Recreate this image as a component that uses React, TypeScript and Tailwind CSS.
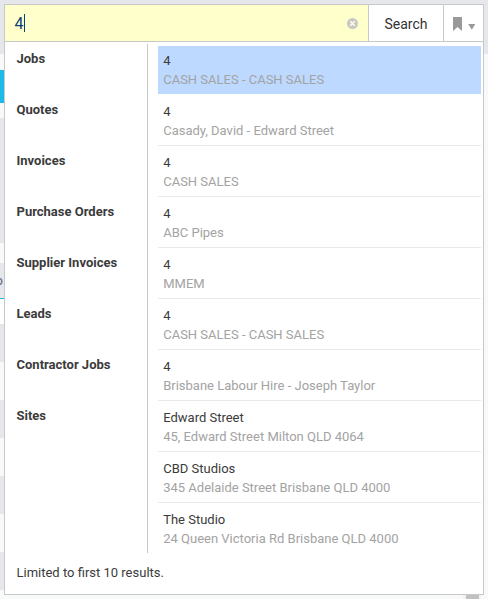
const groups = [
  { label: 'Jobs', items: [['4', 'CASH SALES - CASH SALES']] },
  { label: 'Quotes', items: [['4', 'Casady, David - Edward Street']] },
  { label: 'Invoices', items: [['4', 'CASH SALES']] },
  { label: 'Purchase Orders', items: [['4', 'ABC Pipes']] },
  { label: 'Supplier Invoices', items: [['4', 'MMEM']] },
  { label: 'Leads', items: [['4', 'CASH SALES - CASH SALES']] },
  { label: 'Contractor Jobs', items: [['4', 'Brisbane Labour Hire - Joseph Taylor']] },
  {
    label: 'Sites',
    items: [
      ['Edward Street', '45, Edward Street Milton QLD 4064'],
      ['CBD Studios', '345 Adelaide Street Brisbane QLD 4000'],
      ['The Studio', '24 Queen Victoria Rd Brisbane QLD 4000'],
    ],
  },
];

const results = groups.flatMap((g) => g.items);

function PageBehind() {
  return (
    <div className="flex h-full justify-between">
      <div className="flex w-1 flex-col overflow-hidden">
        <div className="h-[54px] shrink-0 bg-[#e6e7eb]" />
        <div className="h-4 shrink-0" />
        <div className="h-[33px] shrink-0 bg-[#1cb9e9]" />
        <div className="h-[15px] shrink-0" />
        <div className="h-[125px] shrink-0 bg-[#e6e7eb]" />
        <div className="h-5 shrink-0" />
        <div className="flex h-9 shrink-0 items-center justify-end border-b border-[#1cb9e9] bg-[#e6e7eb] pr-px text-[13px] text-[#5b6678]">
          <span>o</span>
        </div>
        <div className="h-[25px] shrink-0 bg-white" />
        <div className="h-[38px] shrink-0 bg-[#e6e7eb]" />
        <div className="h-[38px] shrink-0" />
        <div className="h-[38px] shrink-0 bg-[#e6e7eb]" />
        <div className="h-[38px] shrink-0" />
        <div className="h-[38px] shrink-0 bg-[#e6e7eb]" />
        <div className="h-[38px] shrink-0" />
        <div className="h-[38px] shrink-0 bg-[#e6e7eb]" />
      </div>
      <div className="flex grow flex-col justify-between">
        <div className="h-[54px] bg-[#e6e7eb]" />
        <div className="mr-[7px] flex h-1 w-[18px] justify-center self-end bg-[#f1f1f1]">
          <div className="w-[13px] bg-[#c1c1c1]" />
        </div>
      </div>
    </div>
  );
}

export default function App() {
  return (
    <div className="relative h-[599px] w-[488px] overflow-hidden bg-[#f8f9f9] font-['Roboto',sans-serif] text-[13px] text-[#3b3b3b]">
      <PageBehind />
      <div className="absolute top-1 left-1 flex h-[591px] w-[480px] flex-col border border-[#c8c8c8] bg-white">
        <div className="flex h-[37px] shrink-0 border-b border-[#c8c8c8]">
          <div className="flex w-[364px] items-center border-r border-[#c8c8c8] bg-[#ffffcc] pr-[10px] pl-[9.5px]">
            <span className="w-[9.5px] pt-px text-[16px] leading-[18px] text-[#0b4078]">4</span>
            <span className="h-[18px] w-px bg-[#0b4078]" />
            <svg className="ml-auto" width="11" height="11" viewBox="0 0 11 11">
              <circle cx="5.5" cy="5.5" r="5.5" fill="#c8c8c8" />
              <path d="M3.3 3.3 7.7 7.7M7.7 3.3 3.3 7.7" stroke="#ffffdc" strokeWidth="1.5" />
            </svg>
          </div>
          <button className="w-[75px] border-r border-[#c8c8c8] pt-[3px] text-[14px] text-[#333]">Search</button>
          <button className="flex grow items-start pt-3 pl-[9px]">
            <svg width="24" height="15" viewBox="0 0 24 15" fill="#999">
              <path d="M0 0h9v14L4.5 10 0 14Z" />
              <path d="M15.2 7h7.2L18.8 12.7Z" />
            </svg>
          </button>
        </div>

        <div className="mt-[2px] flex h-[509px] shrink-0">
          <div className="flex w-[143px] flex-col border-r border-[#c8c8c8] pl-[11.5px]">
            {groups.map((g) => (
              <div key={g.label} className="h-[51px] pt-[7px] leading-4 font-bold">
                {g.label}
              </div>
            ))}
          </div>
          <div className="ml-[10px] flex w-[323px] flex-col">
            {results.map(([title, detail], i) => (
              <div
                key={i}
                className={
                  i === 0 || i === results.length - 1
                    ? 'h-[51px] border-b border-transparent pt-[2px]'
                    : 'h-[51px] border-b border-[#eaeaea] pt-[2px]'
                }
              >
                <div className={i === 0 ? 'h-12 bg-[#bdd9ff] pt-[5px] pl-[5.2px]' : 'h-12 pt-[5px] pl-[5.2px]'}>
                  <div className="leading-[19px]">{title}</div>
                  <div className="leading-[19px] text-[#a3a3a3]">{detail}</div>
                </div>
              </div>
            ))}
          </div>
        </div>
        <div className="mt-[12px] pl-[11.5px] leading-4">Limited to first 10 results.</div>
      </div>
    </div>
  );
}
